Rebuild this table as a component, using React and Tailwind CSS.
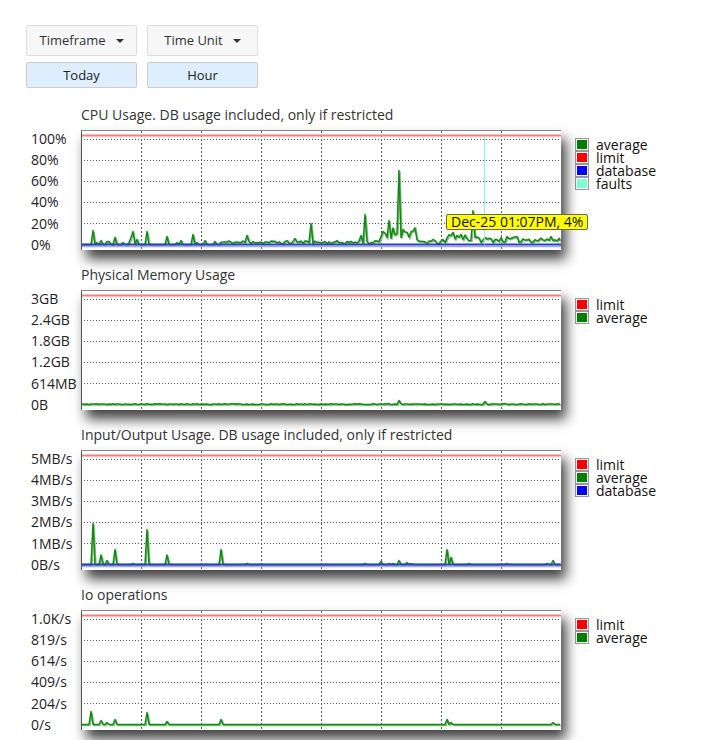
import React from 'react';

// small seeded rng so the noise is the same on every render
const rng = (seed) => () => {
  seed |= 0;
  seed = (seed + 0x6d2b79f5) | 0;
  let t = Math.imul(seed ^ (seed >>> 15), 1 | seed);
  t = (t + Math.imul(t ^ (t >>> 7), 61 | t)) ^ t;
  return ((t ^ (t >>> 14)) >>> 0) / 4294967296;
};

const W = 480;
const H = 120;
const BASE = 114.5;
const STEP = 2;

const buildSeries = ({ seed, noise = [], spikes = [] }) => {
  const rand = rng(seed);
  const vals = Array(W / STEP + 1).fill(0);
  noise.forEach(([from, to, min, max]) => {
    for (let x = from; x <= to; x += STEP) {
      vals[Math.round(x / STEP)] = min + rand() * (max - min);
    }
  });
  spikes.forEach(([x, h]) => {
    vals[Math.round(x / STEP)] = h;
  });
  return vals.map((v, i) => `${Math.min(i * STEP, W - 1)},${(BASE - v).toFixed(1)}`).join(' ');
};

const cpuAvg = buildSeries({
  seed: 11,
  noise: [
    [139, 300, 0.5, 4],
    [300, 335, 6, 18],
    [335, 365, 0.5, 5],
    [365, 390, 3, 12],
    [390, 480, 2, 8],
  ],
  spikes: [
    [11, 14], [16, 2], [20, 4], [25, 3], [28, 3], [33, 7], [42, 2], [48, 2], [50, 7], [52, 13],
    [56, 5], [66, 13], [85, 8], [96, 2], [99, 4], [111, 10], [116, 2], [123, 4], [133, 3],
    [166, 9], [172, 3], [214, 6], [230, 21], [279, 9], [283, 30], [299, 8], [305, 7],
    [307, 24], [317, 74], [371, 12], [380, 10], [391, 34],
  ],
});

const memAvg = buildSeries({
  seed: 5,
  noise: [[0, 480, 0, 0.8]],
  spikes: [[317, 4], [403, 3]],
});

const ioAvg = buildSeries({
  seed: 7,
  spikes: [
    [11, 41], [20, 9.5], [25, 4], [33, 15], [51, 1], [66, 35], [85, 9.5], [140, 15], [166, 1],
    [284, 1], [299, 3], [307, 1], [312, 1], [317, 4], [325, 2], [330, 1], [365, 15], [370, 7],
    [388, 1], [426, 1], [466, 1], [472, 4],
  ],
});

const opsAvg = buildSeries({
  seed: 9,
  spikes: [[10, 13], [20, 4], [25, 2], [33, 5], [66, 12], [85, 3], [140, 5], [365, 5], [370, 2], [472, 2]],
});

const COLORS = {
  average: '#008000',
  limit: '#ff0000',
  database: '#0000ff',
  faults: '#7fffd4',
};

const GRID_Y = [9.5, 30.5, 51.5, 72.5, 93.5];
const GRID_X = [60.5, 120.5, 180.5, 240.5, 300.5, 360.5, 420.5];

const Plot = ({ avg, database, faults, tooltip }) => (
  <div className="relative h-[120px] w-[480px] shrink-0 bg-white shadow-[5px_9px_12px_rgba(0,0,0,0.75)]">
    <svg width={W} height={H} className="absolute left-0 top-0">
      {GRID_Y.map((y) => (
        <line key={y} x1="3" x2={W} y1={y} y2={y} stroke="#555" strokeWidth="1" strokeDasharray="1 2" />
      ))}
      {GRID_X.map((x) => (
        <line key={x} x1={x} x2={x} y1="1" y2={H} stroke="#555" strokeWidth="1" strokeDasharray="2 2" />
      ))}
      <line x1="1" x2={W} y1="5.5" y2="5.5" stroke="#ff7b7b" strokeWidth="2" />
      <polyline points={avg} fill="none" stroke="#7fc07f" strokeWidth="1.5" transform="translate(1,1)" />
      <polyline points={avg} fill="none" stroke="#138a13" strokeWidth="1.5" strokeLinejoin="round" />
      {database && (
        <>
          <line x1="1" x2={W} y1={BASE + 2} y2={BASE + 2} stroke="#a4a8f4" strokeWidth="1.5" />
          <line x1="1" x2={W} y1={BASE} y2={BASE} stroke="#2f40c8" strokeWidth="2" />
        </>
      )}
      {faults && <line x1={faults} x2={faults} y1="6" y2={BASE} stroke="#8ff5d8" strokeWidth="1" />}
      <line x1="0.5" x2="0.5" y1="0" y2={H} stroke="#555" strokeWidth="1" />
      <line x1="0" x2={W} y1="0.5" y2="0.5" stroke="#888" strokeWidth="1" />
    </svg>
    {tooltip && (
      <div className="absolute left-[365px] top-[84px] whitespace-nowrap rounded-[2px] border border-[#666] bg-[#ffff00] px-[4px] text-[14px] leading-[14px] text-[#111]">
        {tooltip}
      </div>
    )}
  </div>
);

const Legend = ({ items }) => (
  <div className="ml-[14px] mt-[8px] text-[14px] leading-[13px] text-[#111]">
    {items.map((name) => (
      <div key={name} className="flex h-[13px] items-center">
        <div className="border border-[#999] p-px">
          <div className="h-[9px] w-[10px]" style={{ background: COLORS[name] }} />
        </div>
        <span className="ml-[7px]">{name}</span>
      </div>
    ))}
  </div>
);

const Chart = ({ title, labels, legend, ...plot }) => (
  <div className="h-[160px]">
    <div className="ml-[55px] h-[26px] text-[14px] leading-[22px] text-[#333]">{title}</div>
    <div className="flex items-start">
      <div className="-mt-[2px] ml-[5px] w-[50px] shrink-0 text-[14px] leading-[21.12px] text-[#222]">
        {labels.map((l) => (
          <div key={l}>{l}</div>
        ))}
      </div>
      <Plot {...plot} />
      <Legend items={legend} />
    </div>
  </div>
);

const Caret = () => (
  <span className="ml-[10px] inline-block h-0 w-0 border-x-[4px] border-t-[4px] border-x-transparent border-t-[#333]" />
);

const charts = [
  {
    title: 'CPU Usage. DB usage included, only if restricted',
    labels: ['100%', '80%', '60%', '40%', '20%', '0%'],
    legend: ['average', 'limit', 'database', 'faults'],
    avg: cpuAvg,
    database: true,
    faults: 403.5,
    tooltip: 'Dec-25 01:07PM, 4%',
  },
  {
    title: 'Physical Memory Usage',
    labels: ['3GB', '2.4GB', '1.8GB', '1.2GB', '614MB', '0B'],
    legend: ['limit', 'average'],
    avg: memAvg,
  },
  {
    title: 'Input/Output Usage. DB usage included, only if restricted',
    labels: ['5MB/s', '4MB/s', '3MB/s', '2MB/s', '1MB/s', '0B/s'],
    legend: ['limit', 'average', 'database'],
    avg: ioAvg,
    database: true,
  },
  {
    title: 'Io operations',
    labels: ['1.0K/s', '819/s', '614/s', '409/s', '204/s', '0/s'],
    legend: ['limit', 'average'],
    avg: opsAvg,
  },
];

export default function App() {
  return (
    <div className="h-[740px] w-[710px] overflow-hidden bg-white pl-[26px] pt-[25px] font-['Open_Sans','Liberation_Sans',sans-serif]">
      <div className="flex gap-[10px]">
        <button className="flex h-[31px] w-[111px] items-center justify-center rounded-[2px] border border-[#ddd] bg-[#f7f7f7] text-[13px] text-[#333]">
          Timeframe
          <Caret />
        </button>
        <button className="flex h-[31px] w-[111px] items-center justify-center rounded-[2px] border border-[#ddd] bg-[#f7f7f7] text-[13px] text-[#333]">
          Time Unit
          <Caret />
        </button>
      </div>
      <div className="mt-[6px] flex gap-[10px]">
        <button className="h-[26px] w-[111px] rounded-[2px] border border-[#ccc] bg-[#deeefc] pt-px text-[13px] text-[#222]">
          Today
        </button>
        <button className="h-[26px] w-[111px] rounded-[2px] border border-[#ccc] bg-[#deeefc] pt-px text-[13px] text-[#222]">
          Hour
        </button>
      </div>
      <div className="mt-[16px]">
        {charts.map((c) => (
          <Chart key={c.title} {...c} />
        ))}
      </div>
    </div>
  );
}
